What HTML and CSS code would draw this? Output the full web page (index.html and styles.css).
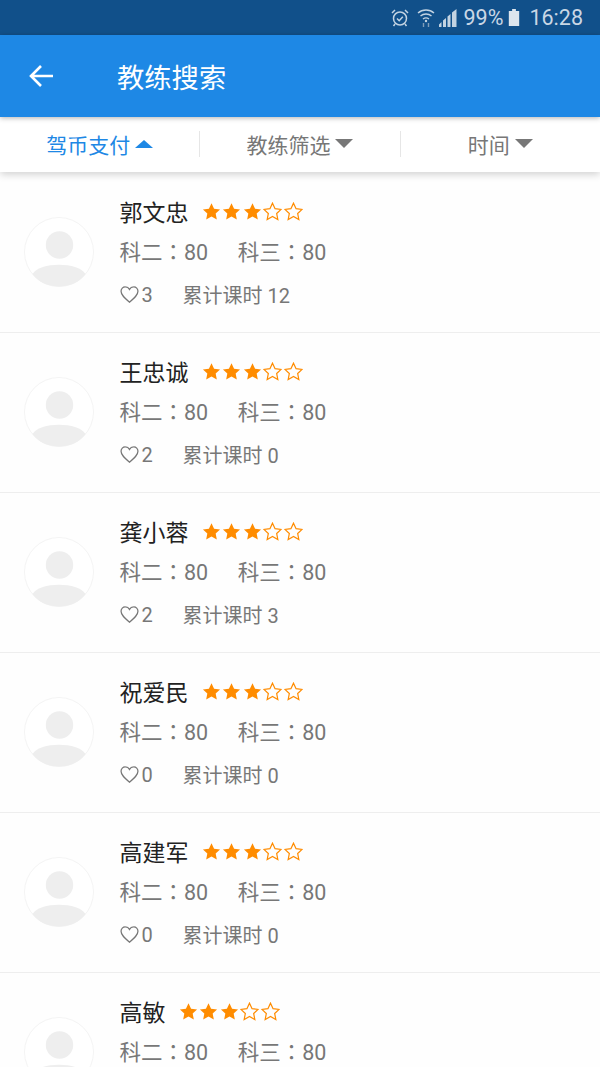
FILE: index.html
```html
<!DOCTYPE html>
<html lang="zh-CN">
<head>
<meta charset="utf-8">
<title>教练搜索</title>
<link rel="stylesheet" href="styles.css">
</head>
<body>
<svg class="defs" width="0" height="0" aria-hidden="true">
  <defs>
    <symbol id="star" viewBox="0 0 20 20"><path d="M10 1.2l2.7 5.8 6.3.8-4.6 4.3 1.2 6.3L10 15.3l-5.600 3.100 1.200-6.300L1 7.800l6.300-.8z"/></symbol>
    <symbol id="avatar" viewBox="0 0 70 70">
      <circle cx="35" cy="35" r="34.500" fill="#fff" stroke="#f4f4f4"/>
      <circle cx="35.500" cy="28" r="13.700" fill="#eeeeee"/>
      <path d="M8.500 57C13 50.500 23 47.800 35 47.800S57 50.500 61.500 57C55.500 65.500 45.500 69.500 35 69.500S14.500 65.500 8.500 57z" fill="#eeeeee"/>
    </symbol>
    <symbol id="heart" viewBox="0 0 18 18"><path d="M9 16.300C4.500 12.500 1 9.600 1 6a4 4 0 0 1 4.200-4.200C6.800 1.800 8.200 2.700 9 4.200 9.800 2.700 11.200 1.800 12.800 1.800A4 4 0 0 1 17 6c0 3.600-3.500 6.500-8 10.300z" fill="none" stroke="#777" stroke-width="1.200"/></symbol>
  </defs>
</svg>
<div class="phone">
  <div class="status">
    <svg class="st-alarm" width="20" height="20" viewBox="0 0 20 20" fill="none" stroke="#c3d3e2" stroke-width="1.500"><circle cx="10" cy="10.500" r="6.500"/><path d="M7 10.500l2.200 2.200 3.600-4M2 5l3-3M18 5l-3-3M5 16l-1.500 2M15 16l1.500 2"/></svg>
    <svg class="st-wifi" width="18" height="22" viewBox="0 0 18 22" fill="none" stroke="#c3d3e2" stroke-width="1.400"><path d="M1 6c4.500-4 11.500-4 16 0M3.500 9c3-2.600 8-2.600 11 0M6 12c1.700-1.300 4.300-1.300 6 0"/><circle cx="9" cy="14" r="1.200" fill="#c3d3e2" stroke="none"/><path d="M6.500 16v4M11.500 16v4" stroke="#7f9cb8"/></svg>
    <svg class="st-signal" width="18" height="18" viewBox="0 0 18 18" fill="#c3d3e2"><path d="M0 15.500L2.500 13v5H0zM4 11.500L7 9v9H4zM8.500 7.500L11.500 5v13h-3zM13 3.500L17.500 0v18H13z"/></svg>
    <span class="st-pct">99%</span>
    <svg class="st-batt" width="12" height="17" viewBox="0 0 12 18" fill="#dce5ee"><path d="M4 0h4v2h3.500v16H.5V2H4z"/></svg>
    <span class="st-time">16:28</span>
  </div>
  <header class="appbar">
    <svg class="back" width="26" height="26" viewBox="0 0 26 26" fill="none" stroke="#fff" stroke-width="2.600"><path d="M25 13H3M13 3L3 13l10 10"/></svg>
    <h1 class="title">教练搜索</h1>
  </header>
  <nav class="tabs">
    <div class="tab tab-active"><span>驾币支付</span><i class="tri tri-up"></i></div>
    <div class="sep"></div>
    <div class="tab"><span>教练筛选</span><i class="tri tri-down"></i></div>
    <div class="sep"></div>
    <div class="tab"><span>时间</span><i class="tri tri-down"></i></div>
  </nav>
  <main class="list">
    <article class="row">
      <svg class="avatar"><use href="#avatar"/></svg>
      <div class="info">
        <div class="name-line"><span class="name">郭文忠</span><span class="stars"><svg class="star on"><use href="#star"/></svg><svg class="star on"><use href="#star"/></svg><svg class="star on"><use href="#star"/></svg><svg class="star off"><use href="#star"/></svg><svg class="star off"><use href="#star"/></svg></span></div>
        <div class="scores"><span>科二<span class="colon" lang="zh-TW">：</span>80</span><span>科三<span class="colon" lang="zh-TW">：</span>80</span></div>
        <div class="meta"><svg class="heart"><use href="#heart"/></svg><span class="likes">3</span><span>累计课时 12</span></div>
      </div>
    </article>
    <article class="row">
      <svg class="avatar"><use href="#avatar"/></svg>
      <div class="info">
        <div class="name-line"><span class="name">王忠诚</span><span class="stars"><svg class="star on"><use href="#star"/></svg><svg class="star on"><use href="#star"/></svg><svg class="star on"><use href="#star"/></svg><svg class="star off"><use href="#star"/></svg><svg class="star off"><use href="#star"/></svg></span></div>
        <div class="scores"><span>科二<span class="colon" lang="zh-TW">：</span>80</span><span>科三<span class="colon" lang="zh-TW">：</span>80</span></div>
        <div class="meta"><svg class="heart"><use href="#heart"/></svg><span class="likes">2</span><span>累计课时 0</span></div>
      </div>
    </article>
    <article class="row">
      <svg class="avatar"><use href="#avatar"/></svg>
      <div class="info">
        <div class="name-line"><span class="name">龚小蓉</span><span class="stars"><svg class="star on"><use href="#star"/></svg><svg class="star on"><use href="#star"/></svg><svg class="star on"><use href="#star"/></svg><svg class="star off"><use href="#star"/></svg><svg class="star off"><use href="#star"/></svg></span></div>
        <div class="scores"><span>科二<span class="colon" lang="zh-TW">：</span>80</span><span>科三<span class="colon" lang="zh-TW">：</span>80</span></div>
        <div class="meta"><svg class="heart"><use href="#heart"/></svg><span class="likes">2</span><span>累计课时 3</span></div>
      </div>
    </article>
    <article class="row">
      <svg class="avatar"><use href="#avatar"/></svg>
      <div class="info">
        <div class="name-line"><span class="name">祝爱民</span><span class="stars"><svg class="star on"><use href="#star"/></svg><svg class="star on"><use href="#star"/></svg><svg class="star on"><use href="#star"/></svg><svg class="star off"><use href="#star"/></svg><svg class="star off"><use href="#star"/></svg></span></div>
        <div class="scores"><span>科二<span class="colon" lang="zh-TW">：</span>80</span><span>科三<span class="colon" lang="zh-TW">：</span>80</span></div>
        <div class="meta"><svg class="heart"><use href="#heart"/></svg><span class="likes">0</span><span>累计课时 0</span></div>
      </div>
    </article>
    <article class="row">
      <svg class="avatar"><use href="#avatar"/></svg>
      <div class="info">
        <div class="name-line"><span class="name">高建军</span><span class="stars"><svg class="star on"><use href="#star"/></svg><svg class="star on"><use href="#star"/></svg><svg class="star on"><use href="#star"/></svg><svg class="star off"><use href="#star"/></svg><svg class="star off"><use href="#star"/></svg></span></div>
        <div class="scores"><span>科二<span class="colon" lang="zh-TW">：</span>80</span><span>科三<span class="colon" lang="zh-TW">：</span>80</span></div>
        <div class="meta"><svg class="heart"><use href="#heart"/></svg><span class="likes">0</span><span>累计课时 0</span></div>
      </div>
    </article>
    <article class="row">
      <svg class="avatar"><use href="#avatar"/></svg>
      <div class="info">
        <div class="name-line"><span class="name">高敏</span><span class="stars"><svg class="star on"><use href="#star"/></svg><svg class="star on"><use href="#star"/></svg><svg class="star on"><use href="#star"/></svg><svg class="star off"><use href="#star"/></svg><svg class="star off"><use href="#star"/></svg></span></div>
        <div class="scores"><span>科二<span class="colon" lang="zh-TW">：</span>80</span><span>科三<span class="colon" lang="zh-TW">：</span>80</span></div>
        <div class="meta"><svg class="heart"><use href="#heart"/></svg><span class="likes">0</span><span>累计课时 0</span></div>
      </div>
    </article>
  </main>
</div>
</body>
</html>
```
FILE: styles.css
```css
* { box-sizing: border-box; margin: 0; padding: 0; }
html, body { height: 100%; overflow: hidden; }
body { background: #fff; font-family: Roboto, "Noto Sans CJK SC", sans-serif; }
.defs { position: absolute; }
.phone { width: 600px; height: 1067px; overflow: hidden; display: flex; flex-direction: column; }

.status {
  height: 35px; flex: none; background: #11508a; color: #c9d7e5;
  display: flex; align-items: center; justify-content: flex-end; padding-right: 17px;
  font-size: 21.500px;
}
.st-alarm { margin-right: 7px; }
.st-wifi { margin-right: 4px; }
.st-signal { margin-right: 7px; }
.st-pct { margin-right: 5px; }
.st-batt { margin-right: 9px; }

.appbar {
  height: 82px; flex: none; background: #1e88e5; color: #fff;
  display: flex; align-items: center; padding-left: 28px; position: relative; z-index: 2;
  box-shadow: 0 1px 5px rgba(0,0,0,.3);
}
.back { margin-right: 63px; }
.title { font-size: 27.300px; font-weight: 400; }

.tabs {
  height: 55px; flex: none; background: #fff; display: flex; align-items: center;
  position: relative; z-index: 1; box-shadow: 0 2px 8px rgba(0,0,0,.2);
  font-size: 21px; color: #777; padding-bottom: 2px;
}
.tab { flex: 1; display: flex; align-items: center; justify-content: center; gap: 5px; }
.tab-active { color: #1e88e5; }
.sep { width: 1px; height: 26px; background: #e6e6e6; flex: none; }
.tri { width: 0; height: 0; border-left: 9px solid transparent; border-right: 9px solid transparent; }
.tri-up { border-bottom: 8px solid #1e88e5; margin-top: 1px; }
.tri-down { border-top: 9px solid #777; margin-top: -1px; }

.list { flex: none; padding-top: 1px; }
.row {
  height: 160px; display: flex; align-items: center; padding-left: 24px; gap: 26px;
  border-bottom: 1px solid #eeeeee; background: #fefefe;
}
.avatar { width: 70px; height: 70px; flex: none; margin-top: -1px; }
.info { display: flex; flex-direction: column; margin-left: -0.500px; }
.name-line { display: flex; align-items: center; gap: 13.500px; height: 32px; }
.name { font-size: 23px; color: #222; margin-bottom: 2px; }
.stars { display: flex; gap: 1.400px; }
.star { width: 19px; height: 19px; }
.star.on { fill: #ff8c00; }
.star.off { fill: none; stroke: #ff8c00; stroke-width: 1.300; }
.scores { display: flex; gap: 29.500px; font-size: 21.500px; color: #777; height: 32px; align-items: center; margin-top: 7px; }
.colon { font-family: "Noto Sans CJK TC", sans-serif; }
.meta { display: flex; align-items: center; font-size: 20px; color: #777; height: 30px; margin-top: 13px; }
.heart { width: 19px; height: 19px; margin-right: 3px; }
.likes { width: 41px; }
```
